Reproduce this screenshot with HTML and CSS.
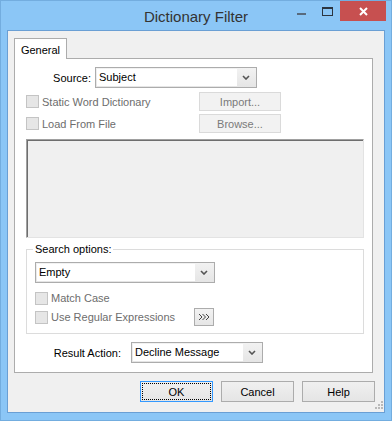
FILE: index.html
```html
<!DOCTYPE html>
<html lang="en">
<head>
    <meta charset="UTF-8">
    <meta name="viewport" content="width=device-width, initial-scale=1.0">
    <title>Dictionary Filter</title>
    <link rel="stylesheet" href="styles.css">
</head>
<body>
    <div class="window">
        <div class="titlebar">
            <span></span>
            <span class="title">Dictionary Filter</span>
            <div class="caption">
                <span class="cap cap-min"><span class="dash"></span></span>
                <span class="cap cap-max"><span class="frame"></span></span>
                <span class="cap cap-close">
                    <svg width="9" height="9" viewBox="0 0 9 9"><path d="M1 1 L8 8 M8 1 L1 8" stroke="#fff" stroke-width="2" fill="none"/></svg>
                </span>
            </div>
        </div>

        <div class="client">
            <div class="tabs">
                <div class="tab">General</div>
            </div>
            <div class="panel">
                <div class="row row-source">
                    <label class="lbl lbl-source">Source:</label>
                    <div class="combo combo-source">
                        <span class="combo-val">Subject</span>
                        <span class="combo-arrow"><svg width="8" height="5" viewBox="0 0 8 5"><path d="M1 1 L4 4 L7 1" stroke="#555" stroke-width="1.6" fill="none"/></svg></span>
                    </div>
                </div>

                <div class="row row-check">
                    <span class="check check-wide"><span class="box"></span>Static Word Dictionary</span>
                    <button class="btn btn-off" disabled>Import...</button>
                </div>
                <div class="row row-check row-gap">
                    <span class="check check-wide"><span class="box"></span>Load From File</span>
                    <button class="btn btn-off" disabled>Browse...</button>
                </div>

                <div class="listbox"></div>

                <fieldset class="group">
                    <legend>Search options:</legend>
                    <div class="combo combo-search">
                        <span class="combo-val">Empty</span>
                        <span class="combo-arrow"><svg width="8" height="5" viewBox="0 0 8 5"><path d="M1 1 L4 4 L7 1" stroke="#555" stroke-width="1.6" fill="none"/></svg></span>
                    </div>
                    <div class="opt-row opt-first">
                        <span class="check"><span class="box"></span>Match Case</span>
                    </div>
                    <div class="opt-row">
                        <span class="check check-regex"><span class="box"></span>Use Regular Expressions</span>
                        <button class="btn btn-more">
                            <svg width="12" height="8" viewBox="0 0 12 8"><path d="M1 1 L4 4 L1 7 M4.5 1 L7.5 4 L4.5 7 M8 1 L11 4 L8 7" stroke="#444" stroke-width="1" fill="none"/></svg>
                        </button>
                    </div>
                </fieldset>

                <div class="row row-result">
                    <label class="lbl lbl-result">Result Action:</label>
                    <div class="combo combo-result">
                        <span class="combo-val">Decline Message</span>
                        <span class="combo-arrow"><svg width="8" height="5" viewBox="0 0 8 5"><path d="M1 1 L4 4 L7 1" stroke="#555" stroke-width="1.6" fill="none"/></svg></span>
                    </div>
                </div>
            </div>

            <div class="buttons">
                <button class="btn btn-main btn-default">OK</button>
                <button class="btn btn-main">Cancel</button>
                <button class="btn btn-main">Help</button>
            </div>

            <svg class="grip" width="9" height="9" viewBox="0 0 9 9">
                <rect x="7" y="1" width="2" height="2" fill="#b9b9b9"/>
                <rect x="4" y="4" width="2" height="2" fill="#b9b9b9"/>
                <rect x="7" y="4" width="2" height="2" fill="#b9b9b9"/>
                <rect x="1" y="7" width="2" height="2" fill="#b9b9b9"/>
                <rect x="4" y="7" width="2" height="2" fill="#b9b9b9"/>
                <rect x="7" y="7" width="2" height="2" fill="#b9b9b9"/>
            </svg>
        </div>
    </div>
</body>
</html>
```

FILE: styles.css
```css
* {
    box-sizing: border-box;
}

body {
    margin: 0;
    font-family: 'Liberation Sans', Arial, sans-serif;
    font-size: 11px;
    color: #000;
    background: #fff;
}

.window {
    width: 392px;
    height: 421px;
    background-color: #8bc6f6;
    border: 1px solid #73addf;
}

/* title bar */
.titlebar {
    height: 29px;
    display: grid;
    grid-template-columns: 1fr auto 1fr;
    align-items: start;
}

.title {
    font-size: 15px;
    color: #333;
    line-height: 29px;
    padding-top: 1px;
}

.caption {
    justify-self: end;
    display: flex;
    margin-right: 5px;
}

.cap {
    display: flex;
    justify-content: center;
    height: 20px;
}

.cap-min {
    width: 26px;
    align-items: flex-start;
    padding-top: 12px;
}

.cap-min .dash {
    width: 9px;
    height: 2px;
    background: #586a7d;
}

.cap-max {
    width: 26px;
    padding-top: 6px;
}

.cap-max .frame {
    width: 11px;
    height: 9px;
    border: 1px solid #2c3540;
    border-top-width: 2px;
}

.cap-close {
    width: 46px;
    background: #c75050;
    align-items: center;
}

/* client area */
.client {
    position: relative;
    width: 378px;
    height: 383px;
    margin: 0 6px;
    background: #f0f0f0;
    border: 1px solid #6a9fd4;
    padding: 7px 0 0 6px;
}

.tabs {
    display: flex;
    height: 20px;
}

.tab {
    position: relative;
    z-index: 1;
    width: 53px;
    height: 21px;
    background: #fff;
    border: 1px solid #acacac;
    border-bottom: none;
    display: flex;
    align-items: center;
    justify-content: center;
    padding-top: 1px;
}

.panel {
    width: 359px;
    height: 315px;
    background: #fff;
    border: 1px solid #acacac;
    padding-top: 8px;
}

.row {
    display: flex;
    align-items: center;
}

.lbl {
    text-align: right;
}

.lbl-source {
    width: 76px;
    margin-right: 4px;
}

.lbl-result {
    width: 106px;
    margin-right: 10px;
}

/* combo boxes */
.combo {
    display: flex;
    height: 21px;
    border: 1px solid #acacac;
    background: linear-gradient(#f2f2f2, #e5e5e5);
    padding: 1px;
}

.combo-val {
    flex: 1;
    background: #fff;
    padding-left: 2px;
    line-height: 17px;
}

.combo-arrow {
    width: 18px;
    display: flex;
    align-items: center;
    justify-content: center;
}

.combo-source {
    width: 162px;
}

.combo-search {
    width: 180px;
}

.combo-result {
    width: 132px;
}

/* check boxes */
.check {
    display: flex;
    align-items: center;
    gap: 3px;
    color: #6d6d6d;
}

.box {
    width: 13px;
    height: 13px;
    border: 1px solid #c4c4c4;
    background: #e6e6e6;
}

.row-check {
    height: 19px;
    margin-top: 4px;
    padding-left: 11px;
}

.row-gap {
    margin-top: 3px;
}

.check-wide {
    width: 173px;
}

.check-regex {
    width: 159px;
}

/* buttons */
.btn {
    font-family: inherit;
    font-size: 11px;
    padding: 0;
    margin: 0;
}

.btn-off {
    width: 82px;
    height: 19px;
    background: #f2f2f2;
    border: 1px solid #dadada;
    color: #7a7a7a;
}

.btn-more {
    width: 20px;
    height: 18px;
    background: linear-gradient(#f2f2f2, #e6e6e6);
    border: 1px solid #acacac;
    display: flex;
    align-items: center;
    justify-content: center;
}

.listbox {
    width: 338px;
    height: 99px;
    margin: 6px 0 0 11px;
    background: #f0f0f0;
    border: 1px solid;
    border-color: #a0a0a0 #e3e3e3 #e3e3e3 #a0a0a0;
    box-shadow: inset 1px 1px 0 #6e6e6e;
}

/* search options group */
.group {
    width: 338px;
    margin: 5px 0 0 11px;
    padding: 6px 8px 7px 8px;
    border: 1px solid #dcdcdc;
}

.group legend {
    padding: 0 2px;
    margin-left: -2px;
    line-height: 13px;
}

.opt-row {
    display: flex;
    align-items: center;
    height: 18px;
    margin-top: 1px;
}

.opt-first {
    margin-top: 6px;
}

.row-result {
    margin-top: 8px;
}

/* dialog buttons */
.buttons {
    display: flex;
    justify-content: flex-end;
    gap: 8px;
    margin-top: 8px;
    padding-right: 9px;
}

.btn-main {
    width: 73px;
    height: 21px;
    background: linear-gradient(#f0f0f0, #e5e5e5);
    border: 1px solid #acacac;
    color: #000;
}

.btn-default {
    border-color: #3399ff;
    outline: 1px dotted #000;
    outline-offset: -3px;
}

.grip {
    position: absolute;
    right: 1px;
    bottom: 3px;
}
```
